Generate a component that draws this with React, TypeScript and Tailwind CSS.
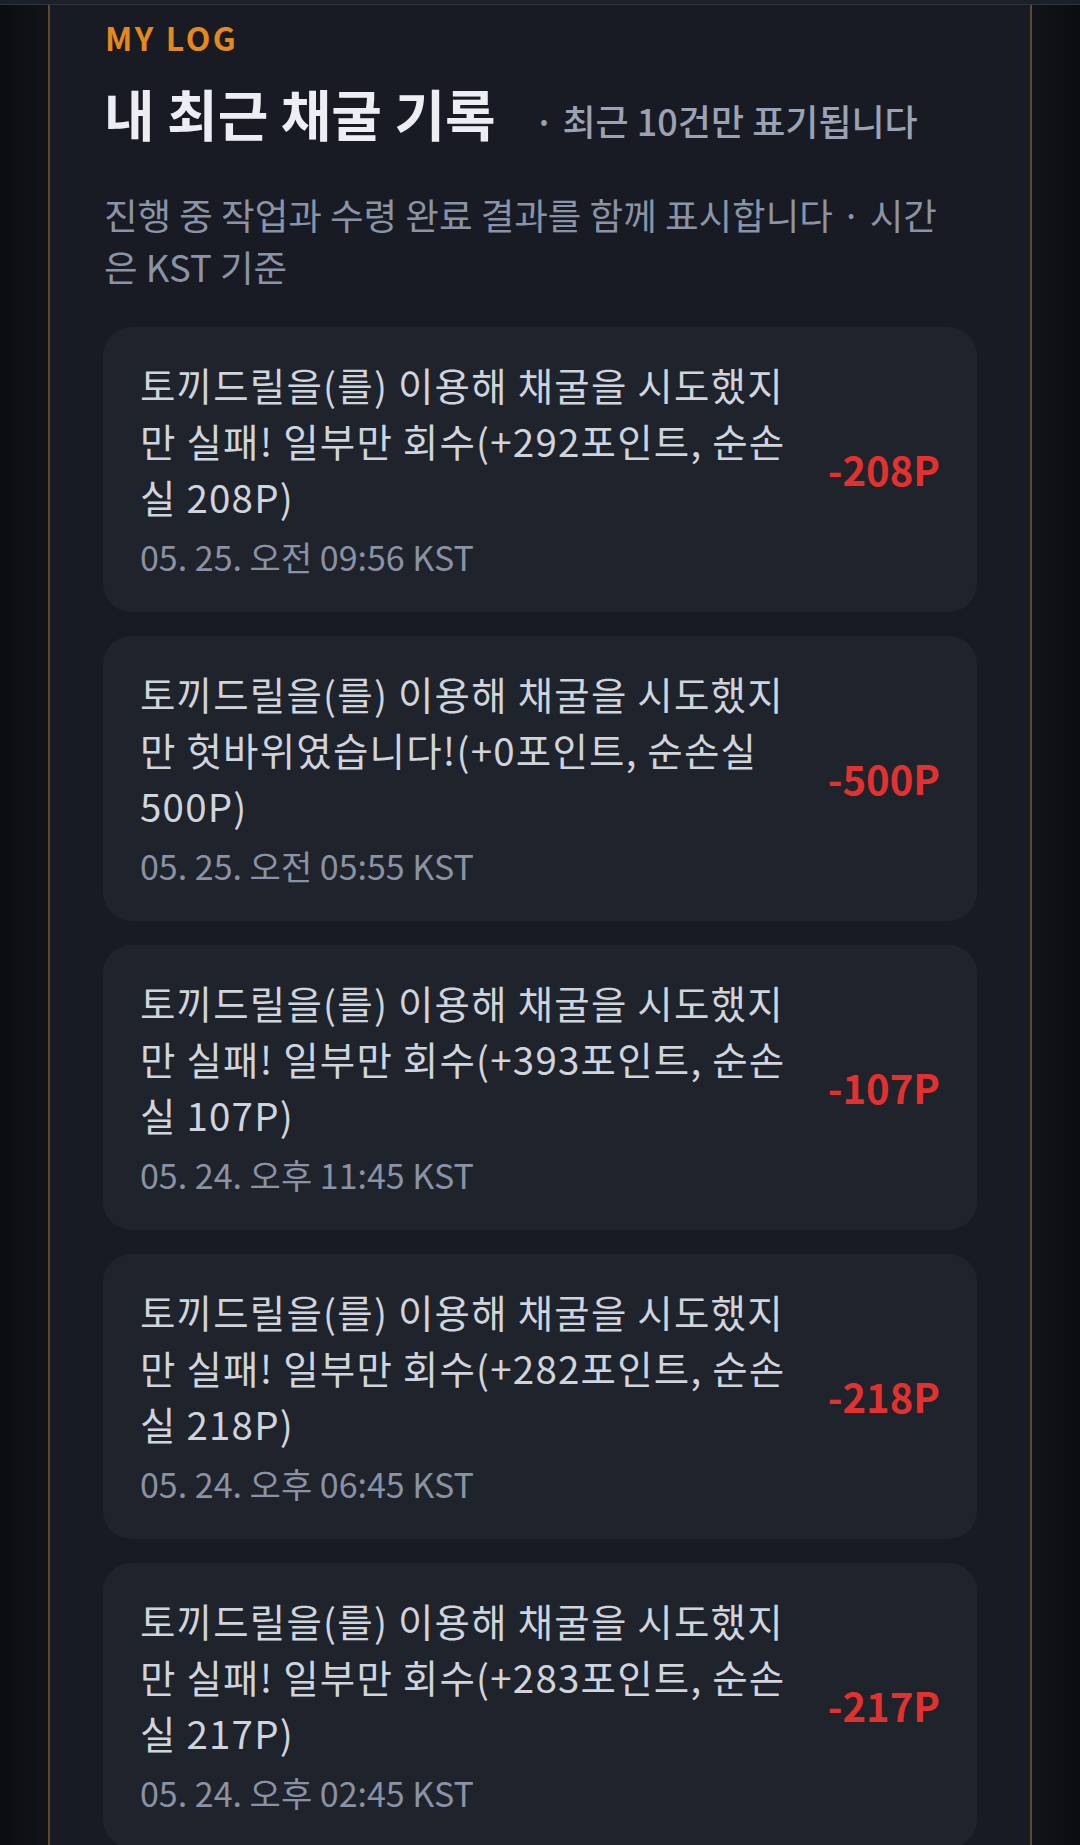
import React from "react";

type Log = { text: string; time: string; amount: string };

const logs: Log[] = [
  {
    text: "토끼드릴을(를) 이용해 채굴을 시도했지만 실패! 일부만 회수(+292포인트, 순손실 208P)",
    time: "05. 25. 오전 09:56 KST",
    amount: "-208P",
  },
  {
    text: "토끼드릴을(를) 이용해 채굴을 시도했지만 헛바위였습니다!(+0포인트, 순손실 500P)",
    time: "05. 25. 오전 05:55 KST",
    amount: "-500P",
  },
  {
    text: "토끼드릴을(를) 이용해 채굴을 시도했지만 실패! 일부만 회수(+393포인트, 순손실 107P)",
    time: "05. 24. 오후 11:45 KST",
    amount: "-107P",
  },
  {
    text: "토끼드릴을(를) 이용해 채굴을 시도했지만 실패! 일부만 회수(+282포인트, 순손실 218P)",
    time: "05. 24. 오후 06:45 KST",
    amount: "-218P",
  },
  {
    text: "토끼드릴을(를) 이용해 채굴을 시도했지만 실패! 일부만 회수(+283포인트, 순손실 217P)",
    time: "05. 24. 오후 02:45 KST",
    amount: "-217P",
  },
];

const font = {
  fontFamily: '"Noto Sans CJK KR", "Noto Sans", sans-serif',
};

export default function App() {
  return (
    <div className="min-h-screen w-full bg-[#0d0e12] flex flex-col" style={font}>
      <div className="h-[5px] w-full bg-[#1c2029] border-b border-[#2e3441]" />
      <div className="flex flex-1">
        <div className="w-[48px] shrink-0 bg-gradient-to-r from-[#0b0c0f] to-[#121419]" />
        <div className="w-[984px] shrink-0 border-x-2 border-[#5c4a2e] bg-[#181b23] px-[53px] pt-[12px] pb-[40px]">
          <div className="text-[32px] leading-[40px] font-bold tracking-[0.08em] text-[#e4891d] pl-[2px]">
            MY LOG
          </div>
          <div className="mt-[21px] flex items-baseline gap-[38px] pl-[1px]">
            <h2 className="text-[55px] leading-[68px] font-bold text-[#eceef4]">내 최근 채굴 기록</h2>
            <span className="text-[36px] font-medium text-[#9aa2b3]">· 최근 10건만 표기됩니다</span>
          </div>
          <p className="mt-[42px] max-w-[850px] text-[36.5px] leading-[52px] text-[#8b94a6] pl-[1px]">
            진행 중 작업과 수령 완료 결과를 함께 표시합니다 · 시간은 KST 기준
          </p>
          <div className="mt-[34px] flex flex-col gap-[24px]">
            {logs.map((log, i) => (
              <div
                key={i}
                className="rounded-[28px] bg-[#1f232c] pl-[37px] pr-[37px] pt-[29px] pb-[30px] grid grid-cols-[672px_1fr] items-center"
              >
                <div className="min-w-0">
                  <p className="text-[38.5px] leading-[56px] tracking-[1.2px] text-[#d0d4dc]">{log.text}</p>
                  <div className="mt-[8px] text-[34px] leading-[50px] text-[#8a92a4]">{log.time}</div>
                </div>
                <div className="text-right text-[40px] font-bold text-[#e2312f]">{log.amount}</div>
              </div>
            ))}
          </div>
        </div>
        <div className="flex-1 bg-gradient-to-r from-[#121419] to-[#0b0c0f]" />
      </div>
    </div>
  );
}
